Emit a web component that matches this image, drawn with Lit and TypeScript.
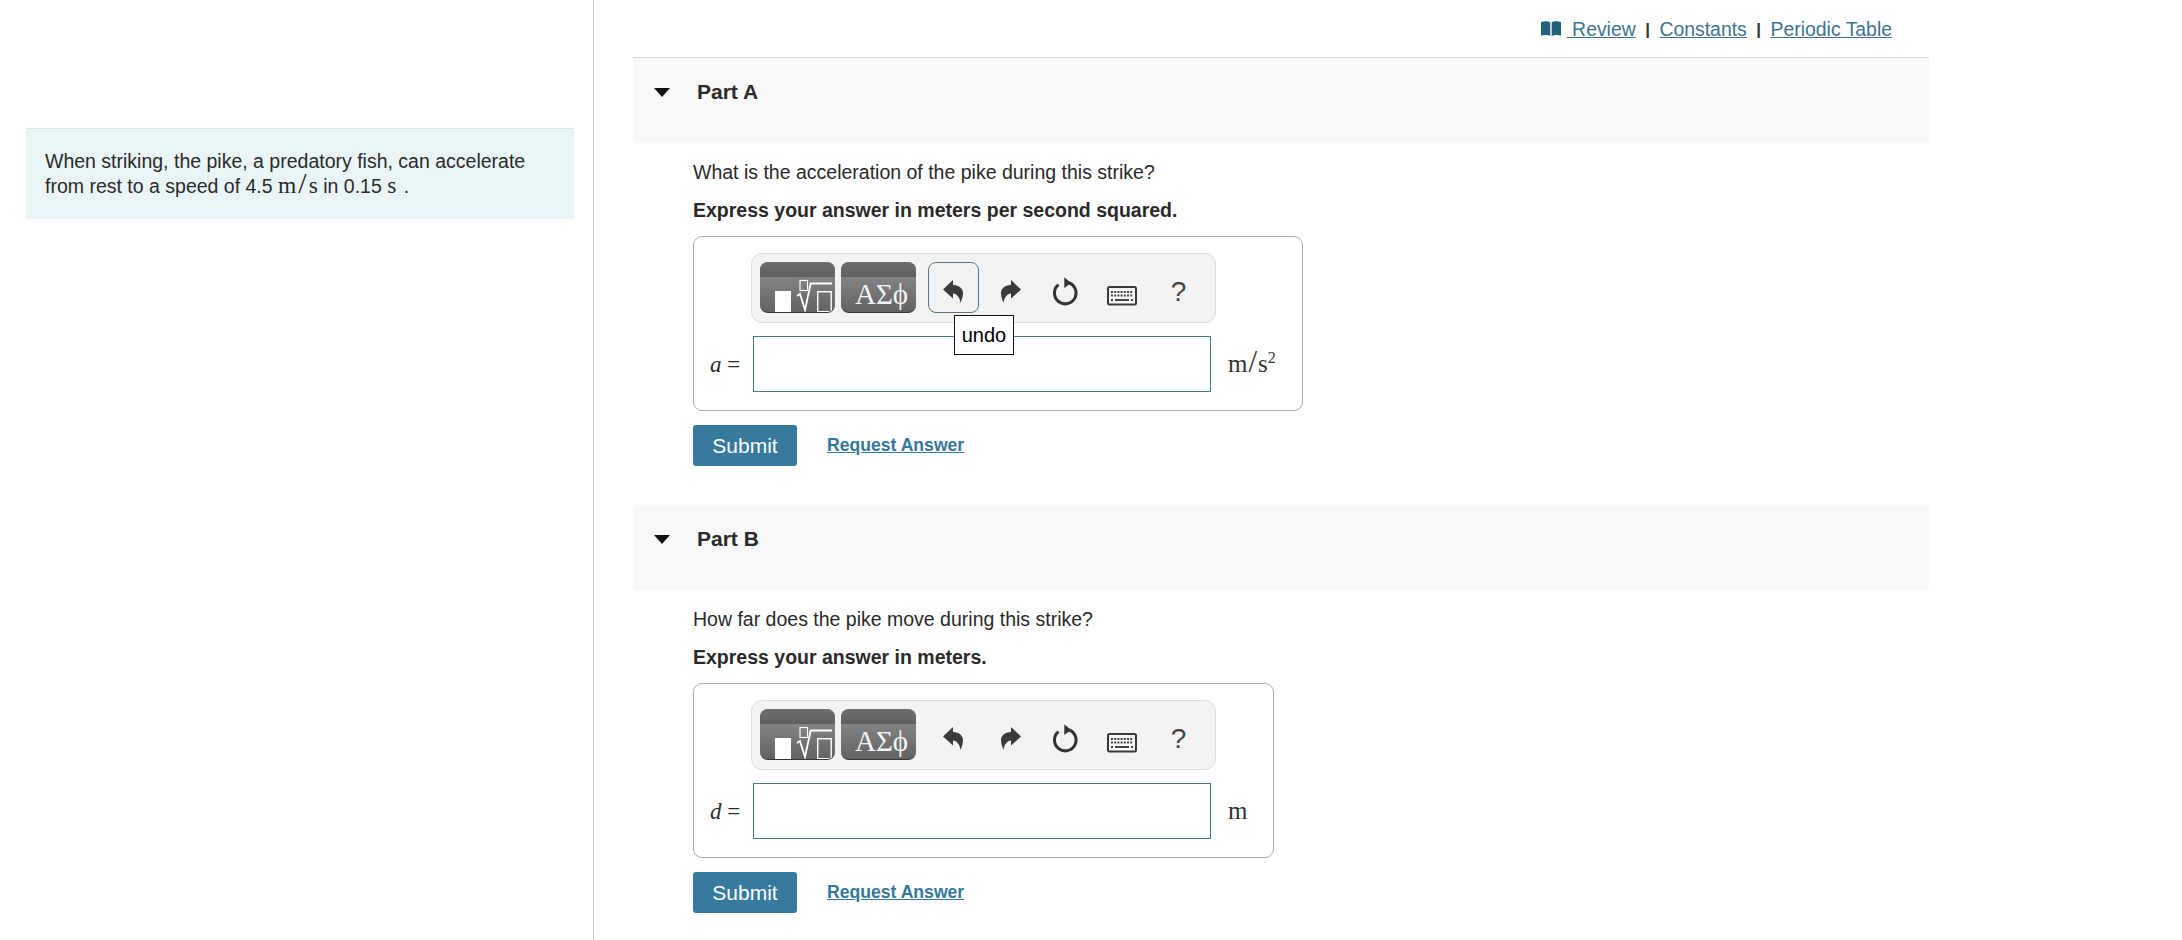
import { LitElement, html, css } from "lit";
import { customElement, property } from "lit/decorators.js";

const undoPath = "M0 9.5 L10 0 V5 C16.5 5 20 9 20 13 C20 17 18.5 20 17.5 23 C17 18 14 13.5 10 13.5 V18.5 Z";

@customElement("math-toolbar")
class MathToolbar extends LitElement {
  @property({ type: Boolean }) active = false;
  static styles = css`
    :host { display: block; }
    .bar { display: flex; align-items: center; width: 465px; height: 70px; box-sizing: border-box; padding: 8px 8px 9px 8px; background: #f3f3f3; border: 1px solid #ddd; border-radius: 11px; }
    .tpl { position: relative; flex: none; width: 75px; height: 51px; box-sizing: border-box; border-radius: 8px; overflow: hidden; margin-right: 6px; border-bottom: 1px solid #333; background: linear-gradient(#929292, #626262); color: #fff; }
    .tpl .top { height: 15px; background: linear-gradient(#6e6e6e, #5f5f5f); }
    .tpl svg { position: absolute; left: 0; top: 0; }
    .greek { font: 29px "Liberation Serif", serif; text-align: center; padding-left: 6px; line-height: 34px; color: #f4f4f4; }
    .tool { flex: none; width: 51px; height: 51px; box-sizing: border-box; padding-top: 9px; display: flex; align-items: center; justify-content: center; border: 1px solid transparent; border-radius: 8px; color: #333; margin-right: 6px; }
    .tool.first { margin-left: 6px; }
    .tool.second { margin-right: 3px; }
    .tool.on { border-color: #5b7688; }
    .tool.kbd { padding-top: 17px; }
    .help { font: 28px "Liberation Sans", sans-serif; color: #444; }
  `;
  render() {
    return html`<div class="bar">
      <div class="tpl"><div class="top"></div>
        <svg width="75" height="51" fill="none" stroke="#fff">
          <rect x="15" y="29" width="16" height="22" fill="#fff" stroke="none"/>
          <rect x="40" y="18.5" width="7.5" height="10" stroke-width="1.2"/>
          <path d="M37 34 L40 32 L45 48 L50.7 21.5 H72" stroke-width="1.8"/>
          <rect x="57.7" y="29.7" width="13.5" height="20" stroke-width="1.4"/>
        </svg>
      </div>
      <div class="tpl"><div class="top"></div><div class="greek">ΑΣϕ</div></div>
      <div class="tool first ${this.active ? "on" : ""}">
        <svg width="21" height="24" viewBox="0 0 21 24"><path d=${undoPath} fill="#3a3a3a"/></svg>
      </div>
      <div class="tool second">
        <svg width="21" height="24" viewBox="0 0 21 24"><g transform="matrix(-1 0 0 1 21 0)"><path d=${undoPath} fill="#3a3a3a"/></g></svg>
      </div>
      <div class="tool">
        <svg width="28" height="30" viewBox="0 0 28 30" fill="none">
          <path d="M15.5 5.3 A10.8 10.8 0 1 1 7.5 7.6" stroke="#333" stroke-width="3"/>
          <path d="M13.3 0.3 L20 6 L13.3 11 Z" fill="#333"/>
        </svg>
      </div>
      <div class="tool kbd">
        <svg width="30" height="20" viewBox="0 0 30 20" fill="none">
          <rect x="1" y="1" width="28" height="17.5" rx="1.5" fill="#fafafa" stroke="#3a3a3a" stroke-width="2"/>
          <path d="M4 6 H26 M4 9.5 H26" stroke="#444" stroke-width="1.8" stroke-dasharray="2 1.2"/>
          <path d="M4 14 H6 M8 14 H22 M24 14 H26" stroke="#444" stroke-width="2"/>
        </svg>
      </div>
      <div class="tool help">?</div>
    </div>`;
  }
}

@customElement("answer-part")
class AnswerPart extends LitElement {
  @property() part = "";
  @property() question = "";
  @property() hint = "";
  @property() variable = "";
  @property() unit = "m";
  @property({ type: Boolean }) sup = false;
  @property({ type: Boolean }) active = false;
  static styles = css`
    :host { display: block; font: 19.5px/25px "Liberation Sans", Arial, sans-serif; color: #2a2a2a; }
    .head { display: flex; align-items: center; height: 85px; padding: 0 0 18px 21px; box-sizing: border-box; background: #f9f9f9; }
    .tri { width: 0; height: 0; border-left: 8.5px solid transparent; border-right: 8.5px solid transparent; border-top: 9px solid #111; margin-right: 27px; margin-top: 2px; }
    .title { font-weight: 700; font-size: 21px; }
    .body { padding: 17px 0 0 60px; }
    .q { height: 25px; }
    .hint { font-weight: 700; margin-top: 13px; height: 25px; }
    .box { position: relative; display: inline-flex; flex-direction: column; box-sizing: border-box; margin-top: 13px; height: 175px; padding: 16px 26px 0 57px; border: 1px solid #aaa; border-radius: 9px; }
    .row { display: flex; align-items: center; margin-top: 13px; position: relative; }
    .var { position: absolute; left: -41px; top: 16px; width: 38px; font: 23px "Liberation Serif", serif; white-space: nowrap; text-align: left; }
    .input { width: 458px; height: 56px; box-sizing: border-box; border: 1px solid #44788f; margin-left: 2px; background: #fff; }
    .unit { font: 25px/30px "Liberation Serif", serif; margin-left: 17px; white-space: nowrap; color: #333; }
    .unit .sl { font-size: 31px; line-height: 0; margin: 0 1px; font-weight: 400; }
    .unit sup { font-size: 16px; line-height: 0; vertical-align: 9px; }
    .tip { position: absolute; left: 260px; top: 78px; width: 60px; height: 40px; box-sizing: border-box; border: 1px solid #111; background: #fff; color: #000; display: flex; align-items: center; justify-content: center; font-size: 20px; }
    .actions { display: flex; align-items: center; margin-top: 14px; }
    .submit { width: 104px; height: 41px; box-sizing: border-box; background: #367a9e; color: #fff; border-radius: 3px; font-size: 21px; display: flex; align-items: center; justify-content: center; }
    .req { margin-left: 30px; color: #35779b; font-weight: 700; font-size: 17.6px; text-decoration: underline; }
  `;
  render() {
    return html`
      <div class="head"><span class="tri"></span><span class="title">${this.part}</span></div>
      <div class="body">
        <div class="q">${this.question}</div>
        <div class="hint">${this.hint}</div>
        <div class="box">
          <math-toolbar ?active=${this.active}></math-toolbar>
          <div class="row">
            <span class="var"><i>${this.variable}</i> =</span>
            <div class="input"></div>
            <span class="unit">${this.unit}${this.sup ? html`<span class="sl">/</span>s<sup>2</sup>` : ""}</span>
          </div>
          ${this.active ? html`<div class="tip">undo</div>` : ""}
        </div>
        <div class="actions"><div class="submit">Submit</div><span class="req">Request Answer</span></div>
      </div>`;
  }
}

@customElement("app-root")
class AppRoot extends LitElement {
  static styles = css`
    :host { display: block; height: 940px; overflow: hidden; background: #fff; font: 19.5px/25px "Liberation Sans", Arial, sans-serif; color: #2a2a2a; }
    .page { display: flex; height: 940px; }
    .left { width: 594px; height: 940px; box-sizing: border-box; border-right: 1px solid #c9d3dc; padding: 128px 19px 0 26px; flex: none; }
    .intro { height: 91px; box-sizing: border-box; background: #e9f5f7; border-top: 1px solid #d9e4e8; padding: 20px 20px 0 19px; }
    .m { font-family: "Liberation Serif", serif; font-size: 23.5px; line-height: 0; }
    .m .sl { font-size: 30px; line-height: 0; margin: 0 2px; }
    .m.end { margin-right: 2px; }
    .right { width: 1296px; margin-left: 39px; flex: none; }
    .links { height: 58px; box-sizing: border-box; border-bottom: 1px solid #ddd; display: flex; align-items: flex-start; justify-content: flex-end; padding: 17px 37px 0 0; font-size: 19.4px; }
    .links a { color: #3e7391; text-decoration: underline; }
    .links .sep { margin: 0 9.5px; color: #333; font-weight: 700; font-size: 17px; }
    .book { margin-right: 6px; align-self: flex-start; margin-top: 4px; }
    .spacer { height: 39px; }
  `;
  render() {
    return html`<div class="page">
      <div class="left">
        <div class="intro">When striking, the pike, a predatory fish, can accelerate from rest to a speed of 4.5 <span class="m">m<span class="sl">/</span>s</span> in 0.15 <span class="m end">s</span> .</div>
      </div>
      <div class="right">
        <div class="links">
          <svg class="book" width="20" height="15" viewBox="0 0 20 15"><path d="M0 1 C3 0 7 0 9.3 1.2 V15 C7 13.8 3 13.8 0 14.6 Z M20 1 C17 0 13 0 10.7 1.2 V15 C13 13.8 17 13.8 20 14.6 Z" fill="#24617c"/></svg>
          <a>&nbsp;Review</a><span class="sep">|</span><a>Constants</a><span class="sep">|</span><a>Periodic Table</a>
        </div>
        <answer-part part="Part A" question="What is the acceleration of the pike during this strike?" hint="Express your answer in meters per second squared." variable="a" sup active></answer-part>
        <div class="spacer"></div>
        <answer-part part="Part B" question="How far does the pike move during this strike?" hint="Express your answer in meters." variable="d"></answer-part>
      </div>
    </div>`;
  }
}
